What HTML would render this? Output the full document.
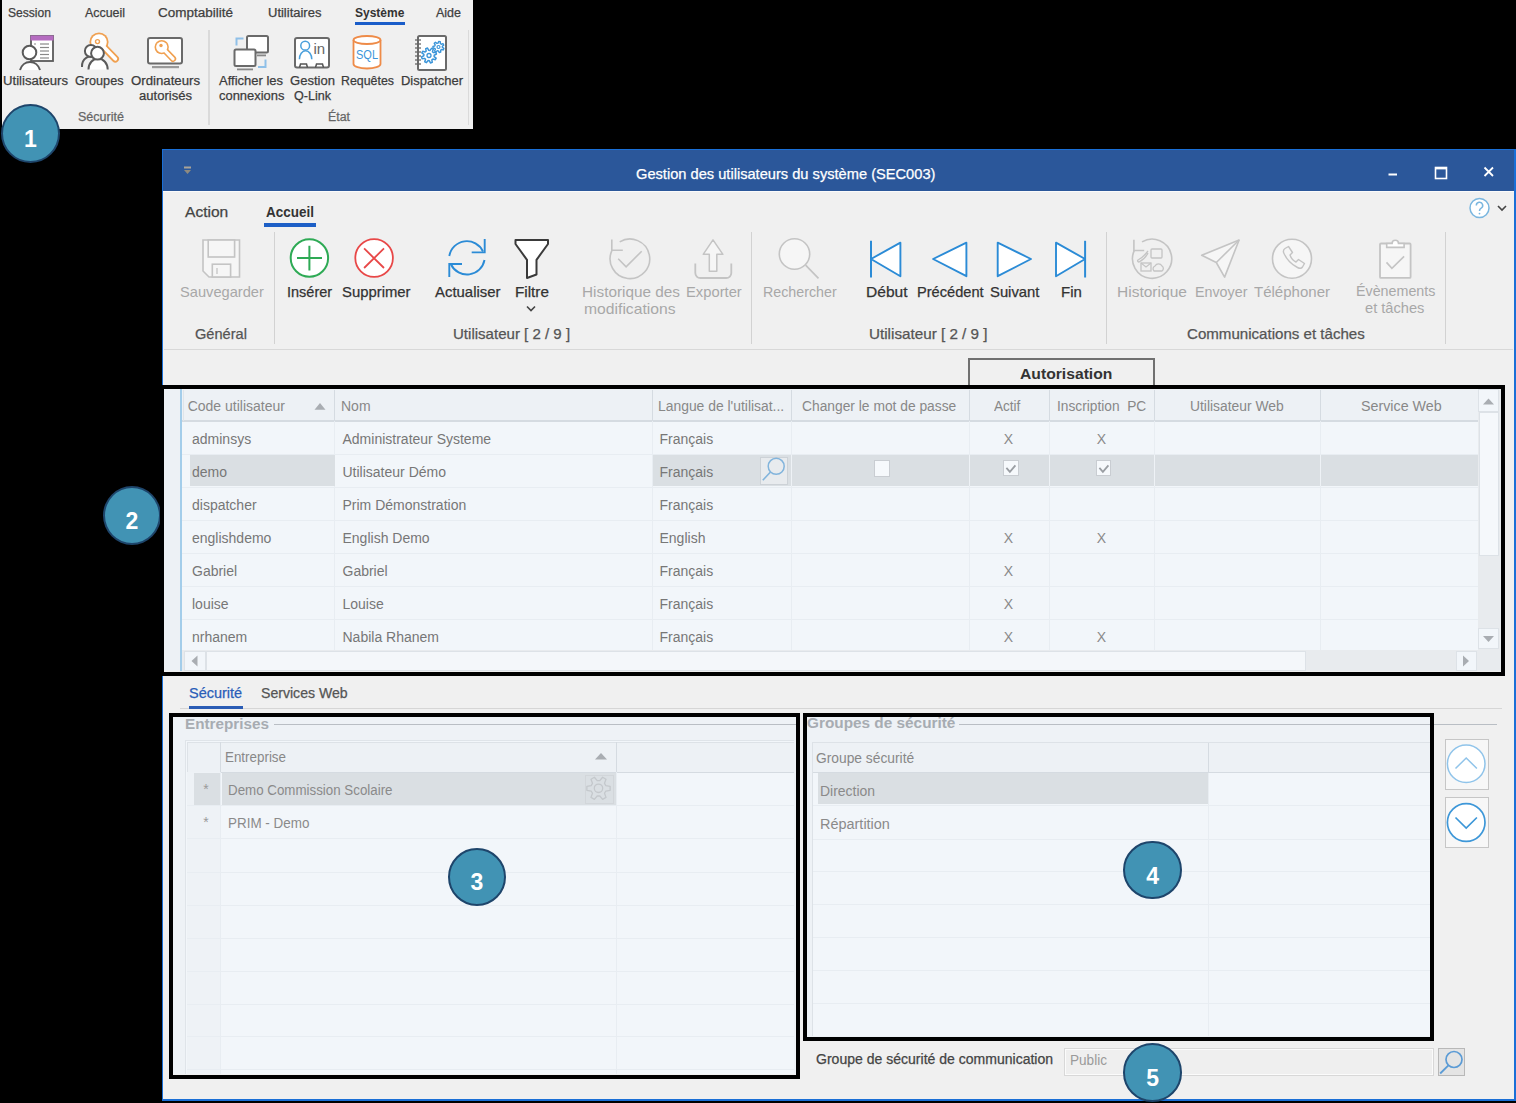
<!DOCTYPE html>
<html><head><meta charset="utf-8"><style>
html,body{margin:0;padding:0;background:#000;}
body{width:1516px;height:1103px;position:relative;overflow:hidden;font-family:"Liberation Sans", sans-serif;}
.a{position:absolute;}
.t{white-space:pre;}
svg.a{overflow:visible;}
.circ{border-radius:50%;background:#4193b4;border:2.2px solid #1e456b;box-sizing:border-box;color:#fff;font-weight:bold;text-align:center;}
</style></head><body>

<div class="a" style="left:2px;top:0px;width:471px;height:129px;background:#f0f0f0;"></div>
<div class="a" style="left:355px;top:22px;width:50px;height:3px;background:#1a5dc9;"></div>
<div class="a" style="left:208px;top:30px;width:2px;height:95px;background:#dadada;"></div>
<div class="a" style="left:468px;top:30px;width:1px;height:95px;background:#dadada;"></div>
<svg class="a" style="left:230px;top:32px;" width="42" height="40" viewBox="0 0 42 40">
<rect x="17" y="4" width="21" height="16.5" rx="1.5" fill="#fff" stroke="#6a6a6a" stroke-width="2"/>
<rect x="27" y="22.5" width="9" height="1.8" fill="#888"/>
<rect x="4.5" y="17.5" width="21" height="16.5" rx="1.5" fill="#fff" stroke="#6a6a6a" stroke-width="2"/>
<rect x="7" y="36.5" width="16" height="1.8" fill="#888"/>
<path d="M6.5 13.5 V6.5 H13.5" fill="none" stroke="#8fc0e8" stroke-width="2"/>
<path d="M28 35 H35.5 V27.5" fill="none" stroke="#8fc0e8" stroke-width="2"/>
</svg>
<svg class="a" style="left:350px;top:33px;" width="34" height="40" viewBox="0 0 34 40">
<path d="M3.5 7 V31 A13.5 4.5 0 0 0 30.5 31 V7" fill="#fff" stroke="#ee8b48" stroke-width="1.8"/>
<ellipse cx="17" cy="7" rx="13.5" ry="4" fill="#fff" stroke="#ee8b48" stroke-width="1.8"/>
<text x="17" y="26.5" text-anchor="middle" font-family="Liberation Sans" font-size="12" fill="#3b95d9" transform="translate(17 0) scale(0.92 1) translate(-17 0)">SQL</text>
</svg>
<div class="a" style="left:162px;top:149px;width:1354px;height:952px;background:#f0f0f0;border:1px solid #1a6fd6;border-right-width:2px;border-bottom-width:2px;box-sizing:border-box;"></div>
<div class="a" style="left:163px;top:150px;width:1351px;height:41px;background:#2b579a;"></div>
<div class="a" style="left:162px;top:149px;width:1353px;height:1px;background:#1a6fd6;"></div>
<div class="a" style="left:163px;top:191px;width:1351px;height:1px;background:#fbfbfb;"></div>
<svg class="a" style="left:181px;top:164px;" width="14" height="16" viewBox="0 0 14 16"><rect x="3" y="2.5" width="7" height="2" fill="#a9a397"/><path d="M3 6 L10 6 L6.5 10z" fill="#8e8a80"/></svg>
<svg class="a" style="left:1380px;top:160px;" width="130" height="24" viewBox="0 0 130 24">
<rect x="8.5" y="13.5" width="8.5" height="2" fill="#fff"/>
<rect x="55.5" y="7.5" width="11" height="11" fill="none" stroke="#fff" stroke-width="1.6"/>
<rect x="55" y="7" width="12" height="2.4" fill="#fff"/>
<path d="M104.5 7.5 L113 16 M113 7.5 L104.5 16" stroke="#fff" stroke-width="1.8"/>
</svg>
<div class="a" style="left:264px;top:223px;width:52px;height:4px;background:#1d5fc6;"></div>
<div class="a" style="left:273.5px;top:232px;width:1.0px;height:112px;background:#d2d2d2;"></div>
<div class="a" style="left:750.5px;top:232px;width:1.0px;height:112px;background:#d2d2d2;"></div>
<div class="a" style="left:1105.5px;top:232px;width:1.0px;height:112px;background:#d2d2d2;"></div>
<div class="a" style="left:1444.5px;top:232px;width:1.0px;height:112px;background:#d2d2d2;"></div>
<div class="a" style="left:164px;top:348.5px;width:1349px;height:1.5px;background:#d8d8d8;"></div>
<svg class="a" style="left:200px;top:237px;" width="44" height="44" viewBox="0 0 44 44">
<path d="M3 3 H39.5 V40 H9 L3 34 Z" fill="#f6f6f6" stroke="#c4c4c4" stroke-width="1.6"/>
<rect x="8.2" y="3" width="26.4" height="17" fill="#f6f6f6" stroke="#c4c4c4" stroke-width="1.6"/>
<rect x="12.3" y="27.2" width="18.3" height="12.8" fill="#f6f6f6" stroke="#c4c4c4" stroke-width="1.6"/>
<line x1="17" y1="31" x2="17" y2="37" stroke="#c4c4c4" stroke-width="1.3"/>
</svg>
<svg class="a" style="left:445px;top:236px;" width="44" height="44" viewBox="0 0 44 44">
<path d="M4.3 20 A17.8 17.8 0 0 1 38 15.5" fill="none" stroke="#2b8bd6" stroke-width="1.9"/>
<path d="M39.7 3 V16.4 H26.7" fill="none" stroke="#2b8bd6" stroke-width="1.9"/>
<path d="M39.5 24 A17.8 17.8 0 0 1 6 28.5" fill="none" stroke="#2b8bd6" stroke-width="1.9"/>
<path d="M4.3 41 V28 H17" fill="none" stroke="#2b8bd6" stroke-width="1.9"/>
</svg>
<svg class="a" style="left:512px;top:236px;" width="40" height="46" viewBox="0 0 40 46">
<path d="M3.5 4 H36 V8 L24.5 23.8 V38.5 L15 42 V23.8 L3.5 8 Z" fill="#fff" stroke="#3a3a3a" stroke-width="2" stroke-linejoin="round"/>
</svg>
<svg class="a" style="left:522px;top:302px;" width="18" height="12" viewBox="0 0 18 12"><path d="M5 4.5 L9 8.5 L13 4.5" fill="none" stroke="#444" stroke-width="1.6"/></svg>
<svg class="a" style="left:606px;top:236px;" width="48" height="46" viewBox="0 0 48 46">
<path d="M5.96 14.43 A19.8 19.8 0 1 0 13.70 5.83" fill="none" stroke="#c4c4c4" stroke-width="1.6"/>
<path d="M5.8 3.4 V14.2 H16.8" fill="none" stroke="#c4c4c4" stroke-width="1.6"/>
<path d="M12.2 22.8 L20.1 30.9 L35.7 15.2" fill="none" stroke="#c4c4c4" stroke-width="1.6"/>
</svg>
<svg class="a" style="left:692px;top:236px;" width="44" height="46" viewBox="0 0 44 46">
<path d="M21 3.9 L30.9 18.3 H24.8 V35.3 H17.3 V18.3 H11.2 Z" fill="#f6f6f6" stroke="#c4c4c4" stroke-width="1.5" stroke-linejoin="round"/>
<path d="M3.3 27.4 V37 a5 5 0 0 0 5 5 H34.3 a5 5 0 0 0 5 -5 V27.4" fill="none" stroke="#c4c4c4" stroke-width="1.8"/>
</svg>
<svg class="a" style="left:866px;top:236px;" width="40" height="46" viewBox="0 0 40 46"><path d="M5 4.8 V41.5" stroke="#2b8bd6" stroke-width="2"/><path d="M5 23 L34.4 6.7 V40.2 Z" fill="#fff" stroke="#2b8bd6" stroke-width="1.9" stroke-linejoin="round"/></svg>
<svg class="a" style="left:930px;top:236px;" width="40" height="46" viewBox="0 0 40 46"><path d="M3.1 23 L36.4 6.7 V40.2 Z" fill="#fff" stroke="#2b8bd6" stroke-width="1.9" stroke-linejoin="round"/></svg>
<svg class="a" style="left:994px;top:236px;" width="40" height="46" viewBox="0 0 40 46"><path d="M3.7 6.7 V40.2 L37 23 Z" fill="#fff" stroke="#2b8bd6" stroke-width="1.9" stroke-linejoin="round"/></svg>
<svg class="a" style="left:1052px;top:236px;" width="40" height="46" viewBox="0 0 40 46"><path d="M4 6.7 V40.2 L33.1 23 Z" fill="#fff" stroke="#2b8bd6" stroke-width="1.9" stroke-linejoin="round"/><path d="M33.1 4.8 V41.5" stroke="#2b8bd6" stroke-width="2"/></svg>
<svg class="a" style="left:1128px;top:236px;" width="48" height="46" viewBox="0 0 48 46">
<path d="M6.34 14.42 A19.6 19.6 0 1 0 14.01 5.90" fill="none" stroke="#c4c4c4" stroke-width="1.6"/>
<path d="M5.9 3.7 V14.5 H16.2" fill="none" stroke="#c4c4c4" stroke-width="1.6"/>
<path d="M20 15 c-3 4 -6 7 -10 9 c-1 1 0 2 1 2 c4 -2 7 -5 9 -9" fill="none" stroke="#c4c4c4" stroke-width="1.3"/>
<rect x="23" y="13" width="11" height="9" rx="1" fill="none" stroke="#c4c4c4" stroke-width="1.3"/>
<rect x="13" y="27" width="10" height="8" fill="none" stroke="#c4c4c4" stroke-width="1.3"/>
<path d="M13 27 l5 4 l5 -4" fill="none" stroke="#c4c4c4" stroke-width="1.1"/>
<path d="M26 35 h8 a3 3 0 0 0 0 -5 a4 4 0 0 0 -7 0 a3 3 0 0 0 -1 5z" fill="none" stroke="#c4c4c4" stroke-width="1.3"/>
</svg>
<svg class="a" style="left:1198px;top:236px;" width="46" height="46" viewBox="0 0 46 46">
<path d="M3.7 19.3 L41.1 4 L26.6 41.1 L18.3 26.5 Z" fill="#f6f6f6" stroke="#c4c4c4" stroke-width="1.6" stroke-linejoin="round"/>
<path d="M18.3 26.5 L41.1 4" stroke="#c4c4c4" stroke-width="1.6"/>
</svg>
<svg class="a" style="left:1376px;top:236px;" width="40" height="46" viewBox="0 0 40 46">
<rect x="4" y="7.5" width="30.6" height="34.4" rx="1" fill="#f6f6f6" stroke="#c4c4c4" stroke-width="1.8"/>
<path d="M10.7 7.5 V11.4 H28.1 V7.5 H22.5 a3.2 3.2 0 0 0 -6.4 0 Z" fill="#fff" stroke="#c4c4c4" stroke-width="1.6"/>
<path d="M10.5 26.4 L15.9 32.4 L28.1 20.4" fill="none" stroke="#c4c4c4" stroke-width="1.6"/>
</svg>
<div class="a" style="left:968px;top:358px;width:187px;height:31px;background:#f0f0f0;border:2px solid #707070;border-bottom:none;box-sizing:border-box;"></div>
<div class="a" style="left:164px;top:389px;width:1337px;height:282px;background:#f2f6fa;"></div>
<div class="a" style="left:164px;top:389px;width:16px;height:282px;background:#edf1f5;"></div>
<div class="a" style="left:180px;top:389px;width:2px;height:282px;background:#a3cdea;"></div>
<div class="a" style="left:182px;top:389px;width:1296px;height:32px;background:#edf1f5;"></div>
<div class="a" style="left:182px;top:420px;width:1296px;height:1.5px;background:#d5dbe1;"></div>
<div class="a" style="left:334px;top:390px;width:1.1999999999999886px;height:31px;background:#d5dbe1;"></div>
<div class="a" style="left:652.3px;top:390px;width:1.2000000000000455px;height:31px;background:#d5dbe1;"></div>
<div class="a" style="left:791px;top:390px;width:1.2000000000000455px;height:31px;background:#d5dbe1;"></div>
<div class="a" style="left:969px;top:390px;width:1.2000000000000455px;height:31px;background:#d5dbe1;"></div>
<div class="a" style="left:1048.5px;top:390px;width:1.2000000000000455px;height:31px;background:#d5dbe1;"></div>
<div class="a" style="left:1154px;top:390px;width:1.2000000000000455px;height:31px;background:#d5dbe1;"></div>
<div class="a" style="left:1320px;top:390px;width:1.2000000000000455px;height:31px;background:#d5dbe1;"></div>
<div class="a" style="left:183px;top:390px;width:0.5999999999999943px;height:31px;background:#dfe4e9;"></div>
<div class="a" style="left:182px;top:454px;width:1296px;height:1px;background:#e8edf2;"></div>
<div class="a" style="left:182px;top:487px;width:1296px;height:1px;background:#e8edf2;"></div>
<div class="a" style="left:182px;top:520px;width:1296px;height:1px;background:#e8edf2;"></div>
<div class="a" style="left:182px;top:553px;width:1296px;height:1px;background:#e8edf2;"></div>
<div class="a" style="left:182px;top:586px;width:1296px;height:1px;background:#e8edf2;"></div>
<div class="a" style="left:182px;top:619px;width:1296px;height:1px;background:#e8edf2;"></div>
<div class="a" style="left:334px;top:421px;width:1px;height:229px;background:#e8edf2;"></div>
<div class="a" style="left:652.3px;top:421px;width:1.0px;height:229px;background:#e8edf2;"></div>
<div class="a" style="left:791px;top:421px;width:1px;height:229px;background:#e8edf2;"></div>
<div class="a" style="left:969px;top:421px;width:1px;height:229px;background:#e8edf2;"></div>
<div class="a" style="left:1048.5px;top:421px;width:1.0px;height:229px;background:#e8edf2;"></div>
<div class="a" style="left:1154px;top:421px;width:1px;height:229px;background:#e8edf2;"></div>
<div class="a" style="left:1320px;top:421px;width:1px;height:229px;background:#e8edf2;"></div>
<div class="a" style="left:189.5px;top:454.5px;width:145.0px;height:31.5px;background:#dadfe3;"></div>
<div class="a" style="left:652.5px;top:454.5px;width:825.5px;height:31.5px;background:#dadfe3;"></div>
<div class="a" style="left:791px;top:454.5px;width:1px;height:31.5px;background:#eef2f6;"></div>
<div class="a" style="left:969px;top:454.5px;width:1px;height:31.5px;background:#eef2f6;"></div>
<div class="a" style="left:1048.5px;top:454.5px;width:1.0px;height:31.5px;background:#eef2f6;"></div>
<div class="a" style="left:1154px;top:454.5px;width:1px;height:31.5px;background:#eef2f6;"></div>
<div class="a" style="left:1320px;top:454.5px;width:1px;height:31.5px;background:#eef2f6;"></div>
<svg class="a" style="left:313px;top:401px;" width="14" height="10" viewBox="0 0 14 10"><path d="M1.5 8.7 L7 2 L12.5 8.7Z" fill="#a9adb2"/></svg>
<div class="a" style="left:760px;top:456.5px;width:28px;height:28.0px;background:#e8ebee;border:1px solid #cdd2d7;box-sizing:border-box;"></div>
<div class="a" style="left:873.5px;top:460px;width:16.0px;height:16.5px;background:#f6f9fc;border:1px solid #c9cdd2;box-sizing:border-box;"></div>
<div class="a" style="left:1003.3px;top:460.3px;width:15.5px;height:16.0px;background:#f6f9fc;border:1px solid #c9cdd2;box-sizing:border-box;"></div>
<svg class="a" style="left:1003.3px;top:460px;" width="16" height="16" viewBox="0 0 16 16"><path d="M3.4 7.8 L6.9 11.8 L12.4 5.4" fill="none" stroke="#9a9ea3" stroke-width="1.8"/></svg>
<div class="a" style="left:1095.9px;top:460.3px;width:15.5px;height:16.0px;background:#f6f9fc;border:1px solid #c9cdd2;box-sizing:border-box;"></div>
<svg class="a" style="left:1095.9px;top:460px;" width="16" height="16" viewBox="0 0 16 16"><path d="M3.4 7.8 L6.9 11.8 L12.4 5.4" fill="none" stroke="#9a9ea3" stroke-width="1.8"/></svg>
<div class="a" style="left:1478px;top:389px;width:23px;height:282px;background:#e8ebee;"></div>
<div class="a" style="left:1478px;top:389px;width:21px;height:23px;background:#f2f6fa;border:1px solid #dde2e7;box-sizing:border-box;"></div>
<svg class="a" style="left:1478px;top:389px;" width="21" height="23" viewBox="0 0 21 23"><path d="M5 15.5 L10.5 9.5 L16 15.5Z" fill="#a9adb2"/></svg>
<div class="a" style="left:1478.5px;top:412px;width:20.5px;height:144px;background:#f5f8fb;border:1px solid #dde2e7;box-sizing:border-box;"></div>
<div class="a" style="left:1478px;top:628px;width:21px;height:21px;background:#f2f6fa;border:1px solid #dde2e7;box-sizing:border-box;"></div>
<svg class="a" style="left:1478px;top:628px;" width="21" height="21" viewBox="0 0 21 21"><path d="M5 8 L10.5 14 L16 8Z" fill="#a9adb2"/></svg>
<div class="a" style="left:182px;top:650px;width:1296px;height:21px;background:#e8ebee;"></div>
<div class="a" style="left:183.5px;top:650.5px;width:22.0px;height:20.5px;background:#f2f6fa;border:1px solid #dde2e7;box-sizing:border-box;"></div>
<svg class="a" style="left:183px;top:650px;" width="22" height="21" viewBox="0 0 22 21"><path d="M14.5 5.5 L8.5 11 L14.5 16.5Z" fill="#a9adb2"/></svg>
<div class="a" style="left:205.5px;top:650.5px;width:1100.5px;height:20.5px;background:#f4f7fa;border:1px solid #dde2e7;box-sizing:border-box;"></div>
<div class="a" style="left:1455.5px;top:650.5px;width:21.5px;height:20.5px;background:#f2f6fa;border:1px solid #dde2e7;box-sizing:border-box;"></div>
<svg class="a" style="left:1455px;top:650px;" width="22" height="21" viewBox="0 0 22 21"><path d="M8 5.5 L14 11 L8 16.5Z" fill="#a9adb2"/></svg>
<div class="a" style="left:180px;top:708px;width:1322px;height:1.2999999999999545px;background:#d6d6d6;"></div>
<div class="a" style="left:189px;top:705.6px;width:53.5px;height:3.7999999999999545px;background:#2a5cb5;"></div>
<div class="a" style="left:173px;top:717px;width:623px;height:357px;background:#eef2f6;"></div>
<div class="a" style="left:807px;top:717px;width:623px;height:320px;background:#eef2f6;"></div>
<div class="a" style="left:273.5px;top:724.3px;width:522.5px;height:1.2000000000000455px;background:#b9bec4;"></div>
<div class="a" style="left:959px;top:723.5px;width:537.5px;height:1.2999999999999545px;background:#b9bec4;"></div>
<div class="a" style="left:185px;top:740px;width:609px;height:334px;background:#f2f6fa;"></div>
<div class="a" style="left:185px;top:740px;width:609px;height:1px;background:#dfe4e9;"></div>
<div class="a" style="left:185px;top:740px;width:1px;height:334px;background:#dfe4e9;"></div>
<div class="a" style="left:187px;top:742px;width:607px;height:30px;background:#edf1f5;"></div>
<div class="a" style="left:187px;top:742px;width:607px;height:1px;background:#dde2e7;"></div>
<div class="a" style="left:187px;top:771.5px;width:607px;height:1.1000000000000227px;background:#d5dbe1;"></div>
<div class="a" style="left:187px;top:742px;width:1px;height:30px;background:#dde2e7;"></div>
<div class="a" style="left:219.5px;top:742px;width:1.1999999999999886px;height:30px;background:#d5dbe1;"></div>
<div class="a" style="left:219.5px;top:772px;width:1.0px;height:302px;background:#e8edf2;"></div>
<div class="a" style="left:616px;top:742px;width:1.2000000000000455px;height:30px;background:#d5dbe1;"></div>
<div class="a" style="left:616px;top:772px;width:1px;height:302px;background:#e8edf2;"></div>
<div class="a" style="left:187px;top:772px;width:32.5px;height:302px;background:#eef2f6;"></div>
<div class="a" style="left:187px;top:804.5px;width:607px;height:1.0px;background:#e8edf2;"></div>
<div class="a" style="left:187px;top:838px;width:607px;height:1px;background:#e8edf2;"></div>
<div class="a" style="left:187px;top:871.5px;width:607px;height:1.0px;background:#e8edf2;"></div>
<div class="a" style="left:187px;top:904.5px;width:607px;height:1.0px;background:#e8edf2;"></div>
<div class="a" style="left:187px;top:937.5px;width:607px;height:1.0px;background:#e8edf2;"></div>
<div class="a" style="left:187px;top:970.5px;width:607px;height:1.0px;background:#e8edf2;"></div>
<div class="a" style="left:187px;top:1003.5px;width:607px;height:1.0px;background:#e8edf2;"></div>
<div class="a" style="left:187px;top:1036px;width:607px;height:1px;background:#e8edf2;"></div>
<div class="a" style="left:187px;top:1069px;width:607px;height:1px;background:#e8edf2;"></div>
<div class="a" style="left:194px;top:772.5px;width:25.5px;height:32.0px;background:#dadfe3;"></div>
<div class="a" style="left:221.5px;top:772.5px;width:394.5px;height:32.0px;background:#dadfe3;"></div>
<svg class="a" style="left:593px;top:750px;" width="16" height="12" viewBox="0 0 16 12"><path d="M2 9.5 L8 3 L14 9.5Z" fill="#a9adb2"/></svg>
<div class="a" style="left:585px;top:774.5px;width:29px;height:29.0px;background:#dadfe3;border:1px solid #d2d6da;box-sizing:border-box;"></div>
<div class="a" style="left:811.5px;top:742px;width:618.5px;height:294px;background:#f2f6fa;"></div>
<div class="a" style="left:811.5px;top:742px;width:618.5px;height:1px;background:#dde2e7;"></div>
<div class="a" style="left:811.5px;top:742px;width:1.0px;height:294px;background:#dde2e7;"></div>
<div class="a" style="left:812.5px;top:743px;width:617.5px;height:29.5px;background:#edf1f5;"></div>
<div class="a" style="left:812.5px;top:772px;width:617.5px;height:1.2000000000000455px;background:#d5dbe1;"></div>
<div class="a" style="left:1207.5px;top:743px;width:1.2000000000000455px;height:29.5px;background:#d5dbe1;"></div>
<div class="a" style="left:1207.5px;top:773px;width:1.0px;height:263px;background:#e8edf2;"></div>
<div class="a" style="left:812.5px;top:804.5px;width:617.5px;height:1.0px;background:#e8edf2;"></div>
<div class="a" style="left:812.5px;top:838.5px;width:617.5px;height:1.0px;background:#e8edf2;"></div>
<div class="a" style="left:812.5px;top:871.3px;width:617.5px;height:1.0px;background:#e8edf2;"></div>
<div class="a" style="left:812.5px;top:904px;width:617.5px;height:1px;background:#e8edf2;"></div>
<div class="a" style="left:812.5px;top:937px;width:617.5px;height:1px;background:#e8edf2;"></div>
<div class="a" style="left:812.5px;top:970px;width:617.5px;height:1px;background:#e8edf2;"></div>
<div class="a" style="left:812.5px;top:1003px;width:617.5px;height:1px;background:#e8edf2;"></div>
<div class="a" style="left:818px;top:773px;width:389.5px;height:31.399999999999977px;background:#dadfe3;"></div>
<div class="a" style="left:1445px;top:739.3px;width:44.200000000000045px;height:50.700000000000045px;background:#f7f7f7;border:1px solid #c6c6c6;box-sizing:border-box;"></div>
<div class="a" style="left:1445px;top:797.2px;width:44.200000000000045px;height:51.299999999999955px;background:#f7f7f7;border:1px solid #c6c6c6;box-sizing:border-box;"></div>
<div class="a" style="left:1064px;top:1047.5px;width:370.20000000000005px;height:28.700000000000045px;background:#efefef;border:1px solid #d8d8d8;box-sizing:border-box;"></div>
<div class="a" style="left:1065px;top:1048.5px;width:368.20000000000005px;height:26.700000000000045px;border:1px solid #fbfbfb;box-sizing:border-box;"></div>
<div class="a" style="left:1437.5px;top:1047.5px;width:27.799999999999955px;height:28.299999999999955px;background:#e4e4e4;border:1.2px solid #b8b8b8;box-sizing:border-box;"></div>
<div class="a t" style="top:6.84px;font-size:12px;line-height:12px;color:#404040;-webkit-text-stroke:0.25px #404040;left:8.00px;transform:scaleX(1.0070);transform-origin:0 0;">Session</div>
<div class="a t" style="top:6.84px;font-size:12px;line-height:12px;color:#404040;-webkit-text-stroke:0.25px #404040;left:85.00px;transform:scaleX(1.0339);transform-origin:0 0;">Accueil</div>
<div class="a t" style="top:6.84px;font-size:12px;line-height:12px;color:#404040;-webkit-text-stroke:0.25px #404040;left:158.00px;transform:scaleX(1.1244);transform-origin:0 0;">Comptabilité</div>
<div class="a t" style="top:6.84px;font-size:12px;line-height:12px;color:#404040;-webkit-text-stroke:0.25px #404040;left:267.60px;transform:scaleX(1.0822);transform-origin:0 0;">Utilitaires</div>
<div class="a t" style="top:6.84px;font-size:12px;line-height:12px;color:#333;font-weight:bold;left:354.60px;transform:scaleX(1.0005);transform-origin:0 0;">Système</div>
<div class="a t" style="top:6.84px;font-size:12px;line-height:12px;color:#404040;-webkit-text-stroke:0.25px #404040;left:436.00px;transform:scaleX(1.0403);transform-origin:0 0;">Aide</div>
<div class="a t" style="top:75.42px;font-size:12.5px;line-height:12.5px;color:#3c3c3c;-webkit-text-stroke:0.25px #3c3c3c;left:3.00px;transform:scaleX(1.0513);transform-origin:0 0;">Utilisateurs</div>
<div class="a t" style="top:75.42px;font-size:12.5px;line-height:12.5px;color:#3c3c3c;-webkit-text-stroke:0.25px #3c3c3c;left:75.00px;transform:scaleX(1.0114);transform-origin:0 0;">Groupes</div>
<div class="a t" style="top:75.42px;font-size:12.5px;line-height:12.5px;color:#3c3c3c;-webkit-text-stroke:0.25px #3c3c3c;left:130.50px;transform:scaleX(1.0565);transform-origin:0 0;">Ordinateurs</div>
<div class="a t" style="top:90.12px;font-size:12.5px;line-height:12.5px;color:#3c3c3c;-webkit-text-stroke:0.25px #3c3c3c;left:139.00px;transform:scaleX(1.0447);transform-origin:0 0;">autorisés</div>
<div class="a t" style="top:75.42px;font-size:12.5px;line-height:12.5px;color:#3c3c3c;-webkit-text-stroke:0.25px #3c3c3c;left:219.40px;transform:scaleX(1.0388);transform-origin:0 0;">Afficher les</div>
<div class="a t" style="top:90.12px;font-size:12.5px;line-height:12.5px;color:#3c3c3c;-webkit-text-stroke:0.25px #3c3c3c;left:218.50px;transform:scaleX(1.0356);transform-origin:0 0;">connexions</div>
<div class="a t" style="top:75.42px;font-size:12.5px;line-height:12.5px;color:#3c3c3c;-webkit-text-stroke:0.25px #3c3c3c;left:289.70px;transform:scaleX(1.0442);transform-origin:0 0;">Gestion</div>
<div class="a t" style="top:90.12px;font-size:12.5px;line-height:12.5px;color:#3c3c3c;-webkit-text-stroke:0.25px #3c3c3c;left:294.00px;transform:scaleX(1.0047);transform-origin:0 0;">Q-Link</div>
<div class="a t" style="top:75.42px;font-size:12.5px;line-height:12.5px;color:#3c3c3c;-webkit-text-stroke:0.25px #3c3c3c;left:341.00px;transform:scaleX(0.9904);transform-origin:0 0;">Requêtes</div>
<div class="a t" style="top:75.42px;font-size:12.5px;line-height:12.5px;color:#3c3c3c;-webkit-text-stroke:0.25px #3c3c3c;left:401.00px;transform:scaleX(1.0377);transform-origin:0 0;">Dispatcher</div>
<div class="a t" style="top:111.42px;font-size:12.5px;line-height:12.5px;color:#666;-webkit-text-stroke:0.25px #666;left:77.80px;transform:scaleX(1.0009);transform-origin:0 0;">Sécurité</div>
<div class="a t" style="top:111.42px;font-size:12.5px;line-height:12.5px;color:#666;-webkit-text-stroke:0.25px #666;left:328.00px;transform:scaleX(0.9888);transform-origin:0 0;">État</div>
<div class="a t" style="top:166.73px;font-size:14.5px;line-height:14.5px;color:#ffffff;-webkit-text-stroke:0.25px #ffffff;left:635.60px;transform:scaleX(1.0095);transform-origin:0 0;">Gestion des utilisateurs du système (SEC003)</div>
<div class="a t" style="top:204.73px;font-size:14.5px;line-height:14.5px;color:#444;-webkit-text-stroke:0.25px #444;left:184.60px;transform:scaleX(1.0741);transform-origin:0 0;">Action</div>
<div class="a t" style="top:204.73px;font-size:14.5px;line-height:14.5px;color:#333;font-weight:bold;left:265.70px;transform:scaleX(0.9284);transform-origin:0 0;">Accueil</div>
<div class="a t" style="top:285.13px;font-size:14.5px;line-height:14.5px;color:#a8a8a8;left:179.70px;transform:scaleX(1.0105);transform-origin:0 0;">Sauvegarder</div>
<div class="a t" style="top:327.33px;font-size:14.5px;line-height:14.5px;color:#555;-webkit-text-stroke:0.25px #555;left:195.40px;transform:scaleX(1.0059);transform-origin:0 0;">Général</div>
<div class="a t" style="top:285.13px;font-size:14.5px;line-height:14.5px;color:#333;-webkit-text-stroke:0.25px #333;left:286.60px;transform:scaleX(0.9991);transform-origin:0 0;">Insérer</div>
<div class="a t" style="top:285.13px;font-size:14.5px;line-height:14.5px;color:#333;-webkit-text-stroke:0.25px #333;left:341.50px;transform:scaleX(1.0241);transform-origin:0 0;">Supprimer</div>
<div class="a t" style="top:285.13px;font-size:14.5px;line-height:14.5px;color:#333;-webkit-text-stroke:0.25px #333;left:434.50px;transform:scaleX(1.0287);transform-origin:0 0;">Actualiser</div>
<div class="a t" style="top:285.13px;font-size:14.5px;line-height:14.5px;color:#333;-webkit-text-stroke:0.25px #333;left:515.00px;transform:scaleX(1.0517);transform-origin:0 0;">Filtre</div>
<div class="a t" style="top:285.13px;font-size:14.5px;line-height:14.5px;color:#a8a8a8;left:581.60px;transform:scaleX(1.0573);transform-origin:0 0;">Historique des</div>
<div class="a t" style="top:301.73px;font-size:14.5px;line-height:14.5px;color:#a8a8a8;left:584.00px;transform:scaleX(1.0824);transform-origin:0 0;">modifications</div>
<div class="a t" style="top:285.13px;font-size:14.5px;line-height:14.5px;color:#a8a8a8;left:686.00px;transform:scaleX(1.0180);transform-origin:0 0;">Exporter</div>
<div class="a t" style="top:327.23px;font-size:14.5px;line-height:14.5px;color:#555;-webkit-text-stroke:0.25px #555;left:453.40px;transform:scaleX(1.0379);transform-origin:0 0;">Utilisateur [ 2 / 9 ]</div>
<div class="a t" style="top:285.13px;font-size:14.5px;line-height:14.5px;color:#a8a8a8;left:763.00px;transform:scaleX(0.9833);transform-origin:0 0;">Rechercher</div>
<div class="a t" style="top:285.13px;font-size:14.5px;line-height:14.5px;color:#333;-webkit-text-stroke:0.25px #333;left:865.50px;transform:scaleX(1.0723);transform-origin:0 0;">Début</div>
<div class="a t" style="top:285.13px;font-size:14.5px;line-height:14.5px;color:#333;-webkit-text-stroke:0.25px #333;left:917.00px;transform:scaleX(1.0074);transform-origin:0 0;">Précédent</div>
<div class="a t" style="top:285.13px;font-size:14.5px;line-height:14.5px;color:#333;-webkit-text-stroke:0.25px #333;left:990.00px;transform:scaleX(1.0212);transform-origin:0 0;">Suivant</div>
<div class="a t" style="top:285.13px;font-size:14.5px;line-height:14.5px;color:#333;-webkit-text-stroke:0.25px #333;left:1061.00px;transform:scaleX(1.0319);transform-origin:0 0;">Fin</div>
<div class="a t" style="top:327.23px;font-size:14.5px;line-height:14.5px;color:#555;-webkit-text-stroke:0.25px #555;left:869.00px;transform:scaleX(1.0503);transform-origin:0 0;">Utilisateur [ 2 / 9 ]</div>
<div class="a t" style="top:285.13px;font-size:14.5px;line-height:14.5px;color:#a8a8a8;left:1117.00px;transform:scaleX(1.0708);transform-origin:0 0;">Historique</div>
<div class="a t" style="top:285.13px;font-size:14.5px;line-height:14.5px;color:#a8a8a8;left:1194.60px;transform:scaleX(0.9849);transform-origin:0 0;">Envoyer</div>
<div class="a t" style="top:285.13px;font-size:14.5px;line-height:14.5px;color:#a8a8a8;left:1254.00px;transform:scaleX(1.0360);transform-origin:0 0;">Téléphoner</div>
<div class="a t" style="top:284.43px;font-size:14.5px;line-height:14.5px;color:#a8a8a8;left:1356.00px;transform:scaleX(0.9850);transform-origin:0 0;">Évènements</div>
<div class="a t" style="top:301.43px;font-size:14.5px;line-height:14.5px;color:#a8a8a8;left:1365.40px;transform:scaleX(1.0095);transform-origin:0 0;">et tâches</div>
<div class="a t" style="top:327.23px;font-size:14.5px;line-height:14.5px;color:#555;-webkit-text-stroke:0.25px #555;left:1186.90px;transform:scaleX(1.0406);transform-origin:0 0;">Communications et tâches</div>
<div class="a t" style="top:366.73px;font-size:14.5px;line-height:14.5px;color:#333;font-weight:bold;left:1020.00px;transform:scaleX(1.0821);transform-origin:0 0;">Autorisation</div>
<div class="a t" style="top:399.15px;font-size:14px;line-height:14px;color:#888888;left:187.70px;">Code utilisateur</div>
<div class="a t" style="top:399.15px;font-size:14px;line-height:14px;color:#888888;left:341.00px;">Nom</div>
<div class="a t" style="top:399.15px;font-size:14px;line-height:14px;color:#888888;left:657.80px;transform:scaleX(0.9921);transform-origin:0 0;">Langue de l'utilisat...</div>
<div class="a t" style="top:399.15px;font-size:14px;line-height:14px;color:#888888;left:802.00px;transform:scaleX(0.9863);transform-origin:0 0;">Changer le mot de passe</div>
<div class="a t" style="top:399.15px;font-size:14px;line-height:14px;color:#888888;left:994.40px;transform:scaleX(0.9694);transform-origin:0 0;">Actif</div>
<div class="a t" style="top:399.15px;font-size:14px;line-height:14px;color:#888888;left:1056.80px;transform:scaleX(0.9797);transform-origin:0 0;">Inscription  PC</div>
<div class="a t" style="top:399.15px;font-size:14px;line-height:14px;color:#888888;left:1189.60px;transform:scaleX(0.9908);transform-origin:0 0;">Utilisateur Web</div>
<div class="a t" style="top:399.15px;font-size:14px;line-height:14px;color:#888888;left:1361.20px;transform:scaleX(1.0188);transform-origin:0 0;">Service Web</div>
<div class="a t" style="top:432.15px;font-size:14px;line-height:14px;color:#777777;left:192.00px;">adminsys</div>
<div class="a t" style="top:432.15px;font-size:14px;line-height:14px;color:#777777;left:342.50px;">Administrateur Systeme</div>
<div class="a t" style="top:432.15px;font-size:14px;line-height:14px;color:#777777;left:659.50px;">Français</div>
<div class="a t" style="top:432.15px;font-size:14px;line-height:14px;color:#8a8a8a;left:1003.83px;">X</div>
<div class="a t" style="top:432.15px;font-size:14px;line-height:14px;color:#8a8a8a;left:1096.83px;">X</div>
<div class="a t" style="top:465.15px;font-size:14px;line-height:14px;color:#777777;left:192.00px;">demo</div>
<div class="a t" style="top:465.15px;font-size:14px;line-height:14px;color:#777777;left:342.50px;">Utilisateur Démo</div>
<div class="a t" style="top:465.15px;font-size:14px;line-height:14px;color:#777777;left:659.50px;">Français</div>
<div class="a t" style="top:498.15px;font-size:14px;line-height:14px;color:#777777;left:192.00px;">dispatcher</div>
<div class="a t" style="top:498.15px;font-size:14px;line-height:14px;color:#777777;left:342.50px;">Prim Démonstration</div>
<div class="a t" style="top:498.15px;font-size:14px;line-height:14px;color:#777777;left:659.50px;">Français</div>
<div class="a t" style="top:531.15px;font-size:14px;line-height:14px;color:#777777;left:192.00px;">englishdemo</div>
<div class="a t" style="top:531.15px;font-size:14px;line-height:14px;color:#777777;left:342.50px;">English Demo</div>
<div class="a t" style="top:531.15px;font-size:14px;line-height:14px;color:#777777;left:659.50px;">English</div>
<div class="a t" style="top:531.15px;font-size:14px;line-height:14px;color:#8a8a8a;left:1003.83px;">X</div>
<div class="a t" style="top:531.15px;font-size:14px;line-height:14px;color:#8a8a8a;left:1096.83px;">X</div>
<div class="a t" style="top:564.15px;font-size:14px;line-height:14px;color:#777777;left:192.00px;">Gabriel</div>
<div class="a t" style="top:564.15px;font-size:14px;line-height:14px;color:#777777;left:342.50px;">Gabriel</div>
<div class="a t" style="top:564.15px;font-size:14px;line-height:14px;color:#777777;left:659.50px;">Français</div>
<div class="a t" style="top:564.15px;font-size:14px;line-height:14px;color:#8a8a8a;left:1003.83px;">X</div>
<div class="a t" style="top:597.15px;font-size:14px;line-height:14px;color:#777777;left:192.00px;">louise</div>
<div class="a t" style="top:597.15px;font-size:14px;line-height:14px;color:#777777;left:342.50px;">Louise</div>
<div class="a t" style="top:597.15px;font-size:14px;line-height:14px;color:#777777;left:659.50px;">Français</div>
<div class="a t" style="top:597.15px;font-size:14px;line-height:14px;color:#8a8a8a;left:1003.83px;">X</div>
<div class="a t" style="top:630.15px;font-size:14px;line-height:14px;color:#777777;left:192.00px;">nrhanem</div>
<div class="a t" style="top:630.15px;font-size:14px;line-height:14px;color:#777777;left:342.50px;">Nabila Rhanem</div>
<div class="a t" style="top:630.15px;font-size:14px;line-height:14px;color:#777777;left:659.50px;">Français</div>
<div class="a t" style="top:630.15px;font-size:14px;line-height:14px;color:#8a8a8a;left:1003.83px;">X</div>
<div class="a t" style="top:630.15px;font-size:14px;line-height:14px;color:#8a8a8a;left:1096.83px;">X</div>
<div class="a t" style="top:685.73px;font-size:14.5px;line-height:14.5px;color:#2a5db8;-webkit-text-stroke:0.25px #2a5db8;left:189.00px;transform:scaleX(0.9999);transform-origin:0 0;">Sécurité</div>
<div class="a t" style="top:686.15px;font-size:14px;line-height:14px;color:#555;-webkit-text-stroke:0.25px #555;left:260.60px;transform:scaleX(1.0069);transform-origin:0 0;">Services Web</div>
<div class="a t" style="top:716.93px;font-size:14.5px;line-height:14.5px;color:#a7acb2;font-weight:bold;left:184.80px;transform:scaleX(1.0527);transform-origin:0 0;">Entreprises</div>
<div class="a t" style="top:716.43px;font-size:14.5px;line-height:14.5px;color:#a7acb2;font-weight:bold;left:806.80px;transform:scaleX(1.0583);transform-origin:0 0;">Groupes de sécurité</div>
<div class="a t" style="top:750.35px;font-size:14px;line-height:14px;color:#888888;left:225.30px;transform:scaleX(0.9559);transform-origin:0 0;">Entreprise</div>
<div class="a t" style="top:782.15px;font-size:14px;line-height:14px;color:#9a9a9a;left:203.30px;">*</div>
<div class="a t" style="top:815.15px;font-size:14px;line-height:14px;color:#9a9a9a;left:203.30px;">*</div>
<div class="a t" style="top:783.35px;font-size:14px;line-height:14px;color:#8a8a8a;left:227.50px;transform:scaleX(0.9524);transform-origin:0 0;">Demo Commission Scolaire</div>
<div class="a t" style="top:816.35px;font-size:14px;line-height:14px;color:#8a8a8a;left:227.50px;transform:scaleX(0.9599);transform-origin:0 0;">PRIM - Demo</div>
<div class="a t" style="top:750.65px;font-size:14px;line-height:14px;color:#888888;left:816.30px;transform:scaleX(0.9859);transform-origin:0 0;">Groupe sécurité</div>
<div class="a t" style="top:783.65px;font-size:14px;line-height:14px;color:#8a8a8a;left:819.70px;transform:scaleX(0.9973);transform-origin:0 0;">Direction</div>
<div class="a t" style="top:816.65px;font-size:14px;line-height:14px;color:#8a8a8a;left:819.70px;transform:scaleX(1.0324);transform-origin:0 0;">Répartition</div>
<div class="a t" style="top:1051.95px;font-size:14px;line-height:14px;color:#444;-webkit-text-stroke:0.25px #444;left:816.30px;transform:scaleX(1.0022);transform-origin:0 0;">Groupe de sécurité de communication</div>
<div class="a t" style="top:1053.15px;font-size:14px;line-height:14px;color:#9a9a9a;left:1070.00px;transform:scaleX(0.9701);transform-origin:0 0;">Public</div>
<div class="a" style="left:160px;top:385px;width:1345px;height:290.5px;border:4px solid #000;box-sizing:border-box;"></div>
<div class="a" style="left:169px;top:713px;width:631px;height:366px;border:4px solid #000;box-sizing:border-box;"></div>
<div class="a" style="left:803px;top:713px;width:631px;height:328px;border:4px solid #000;box-sizing:border-box;"></div>
<svg class="a" style="left:14px;top:30px;" width="45" height="42" viewBox="0 0 45 42">
<rect x="17" y="6" width="22" height="25" fill="#fff" stroke="#5a5a5a" stroke-width="1.8"/>
<rect x="16.5" y="5.5" width="23" height="5" fill="#b56cc0"/>
<g stroke="#888" stroke-width="1.2"><line x1="26" y1="14" x2="35" y2="14"/><line x1="26" y1="17.5" x2="35" y2="17.5"/><line x1="26" y1="21" x2="35" y2="21"/><line x1="26" y1="24.5" x2="35" y2="24.5"/><line x1="26" y1="28" x2="35" y2="28"/><line x1="20" y1="14" x2="22" y2="14"/></g>
<path d="M6 40 A10.5 11.5 0 0 1 26 40" fill="#fff" stroke="#5a5a5a" stroke-width="2"/>
<circle cx="15.5" cy="22.5" r="6.8" fill="#fff" stroke="#5a5a5a" stroke-width="2"/>
</svg>
<svg class="a" style="left:78px;top:30px;" width="45" height="42" viewBox="0 0 45 42">
<g fill="#f0a050" stroke="#f0a050"><circle cx="21" cy="12" r="9.6" stroke="none"/><line x1="21" y1="12" x2="37.3" y2="28.8" stroke-width="7.4" stroke-linecap="round"/></g>
<g fill="#fff" stroke="#fff"><circle cx="21" cy="12" r="7.8" stroke="none"/><line x1="21" y1="12" x2="37.3" y2="28.8" stroke-width="3.8" stroke-linecap="round"/></g>
<circle cx="19.5" cy="11.6" r="2" fill="none" stroke="#f0a050" stroke-width="1.4"/>
<path d="M4 37 A9 10 0 0 1 18 28" fill="none" stroke="#5a5a5a" stroke-width="2"/>
<circle cx="12.9" cy="21" r="6" fill="#fff" stroke="#5a5a5a" stroke-width="2"/>
<path d="M10.5 39.5 A9.6 11 0 0 1 29.7 39.5" fill="#fff" stroke="#5a5a5a" stroke-width="2"/>
<circle cx="19.5" cy="23.2" r="6.4" fill="#fff" stroke="#5a5a5a" stroke-width="2"/>
</svg>
<svg class="a" style="left:145px;top:34px;" width="40" height="36" viewBox="0 0 40 36">
<rect x="3" y="4" width="34" height="25.5" rx="2" fill="#fff" stroke="#6a6a6a" stroke-width="2"/>
<rect x="7" y="32" width="27" height="2.2" fill="#9a9a9a"/>
<g fill="#f0a050" stroke="#f0a050"><circle cx="16.7" cy="13.1" r="7.2" stroke="none"/><line x1="16.7" y1="13.1" x2="28" y2="24.8" stroke-width="6.4" stroke-linecap="round"/></g>
<g fill="#fff" stroke="#fff"><circle cx="16.7" cy="13.1" r="5.6" stroke="none"/><line x1="16.7" y1="13.1" x2="28" y2="24.8" stroke-width="3.2" stroke-linecap="round"/></g>
<circle cx="16" cy="11.5" r="1.7" fill="#f0a050"/>
</svg>
<svg class="a" style="left:292px;top:35px;" width="40" height="36" viewBox="0 0 40 36">
<rect x="3" y="3" width="34" height="29.5" rx="2" fill="#fff" stroke="#6a6a6a" stroke-width="2"/>
<circle cx="13.2" cy="10.7" r="4.4" fill="none" stroke="#4aa0dc" stroke-width="1.5"/>
<path d="M7.4 24.2 A6.2 8.5 0 0 1 19.8 24.2" fill="none" stroke="#4aa0dc" stroke-width="1.5"/>
<text x="21.5" y="19.2" font-family="Liberation Sans" font-size="15" fill="#666">in</text>
<path d="M7.5 32.5 l1 -3.5 h6 l1 3.5 M23.5 32.5 l1 -3.5 h6 l1 3.5" fill="none" stroke="#555" stroke-width="1.5"/>
</svg>
<svg class="a" style="left:412px;top:33px;" width="38" height="40" viewBox="0 0 38 40">
<rect x="6" y="3" width="28" height="34" rx="1.5" fill="#fff" stroke="#6a6a6a" stroke-width="2"/>
<g stroke="#666" stroke-width="1.3"><line x1="3" y1="7" x2="9" y2="7"/><line x1="3" y1="11" x2="9" y2="11"/><line x1="3" y1="15" x2="9" y2="15"/><line x1="3" y1="19" x2="9" y2="19"/><line x1="3" y1="23" x2="9" y2="23"/><line x1="3" y1="27" x2="9" y2="27"/><line x1="3" y1="31" x2="9" y2="31"/></g>
<path d="M22.10 23.53 L24.16 25.04 L23.30 26.75 L20.86 25.98 L19.87 26.83 L20.26 29.36 L18.46 29.96 L17.27 27.69 L15.97 27.60 L14.46 29.66 L12.75 28.80 L13.52 26.36 L12.67 25.37 L10.14 25.76 L9.54 23.96 L11.81 22.77 L11.90 21.47 L9.84 19.96 L10.70 18.25 L13.14 19.02 L14.13 18.17 L13.74 15.64 L15.54 15.04 L16.73 17.31 L18.03 17.40 L19.54 15.34 L21.25 16.20 L20.48 18.64 L21.33 19.63 L23.86 19.24 L24.46 21.04 L22.19 22.23Z" fill="#fff" stroke="#3b95d9" stroke-width="1.5" stroke-linejoin="round"/>
<circle cx="17" cy="22.5" r="2" fill="none" stroke="#3b95d9" stroke-width="1.3"/>
<path d="M30.38 14.39 L31.91 15.45 L31.28 16.92 L29.46 16.54 L28.62 17.28 L28.74 19.13 L27.19 19.56 L26.36 17.90 L25.26 17.70 L23.88 18.95 L22.59 18.01 L23.36 16.32 L22.83 15.33 L21.00 15.04 L20.93 13.44 L22.73 12.99 L23.17 11.97 L22.25 10.35 L23.46 9.30 L24.94 10.43 L26.02 10.13 L26.71 8.40 L28.28 8.69 L28.32 10.55 L29.22 11.21 L31.00 10.67 L31.76 12.09 L30.33 13.27Z" fill="#fff" stroke="#3b95d9" stroke-width="1.4" stroke-linejoin="round"/>
<circle cx="26.5" cy="14" r="1.5" fill="none" stroke="#3b95d9" stroke-width="1.2"/>
</svg>
<svg class="a" style="left:1466px;top:196px;" width="44" height="24" viewBox="0 0 44 24">
<circle cx="13.5" cy="12" r="9.5" fill="#fff" stroke="#7ab6df" stroke-width="1.5"/>
<path d="M10.3 9.5 a3.2 3.2 0 1 1 4.6 2.9 c-1.2 0.7 -1.4 1.3 -1.4 2.6" fill="none" stroke="#7ab6df" stroke-width="1.5"/>
<circle cx="13.5" cy="17.6" r="0.9" fill="#7ab6df"/>
<path d="M32 10 l4 4 l4 -4" fill="none" stroke="#444" stroke-width="1.6"/>
</svg>
<svg class="a" style="left:288px;top:237px;" width="44" height="44" viewBox="0 0 44 44"><circle cx="21.4" cy="21" r="18.7" fill="#fff" stroke="#2eaa55" stroke-width="2"/>
<path d="M21.4 8.8 V33.4 M9 21 H34" stroke="#2eaa55" stroke-width="2"/></svg>
<svg class="a" style="left:353px;top:237px;" width="44" height="44" viewBox="0 0 44 44"><circle cx="21.1" cy="21" r="18.8" fill="#fff" stroke="#e84848" stroke-width="1.8"/>
<path d="M11.1 11.4 L31 31 M31 11.4 L11.1 31" stroke="#e84848" stroke-width="1.8"/></svg>
<svg class="a" style="left:776px;top:236px;" width="46" height="46" viewBox="0 0 46 46">
<circle cx="18.5" cy="18" r="15.2" fill="#f6f6f6" stroke="#c4c4c4" stroke-width="1.6"/>
<path d="M29.6 29.2 L42.5 42.3" stroke="#c4c4c4" stroke-width="1.7"/>
</svg>
<svg class="a" style="left:1270px;top:236px;" width="46" height="46" viewBox="0 0 46 46">
<circle cx="22" cy="22.7" r="19.5" fill="#f6f6f6" stroke="#c4c4c4" stroke-width="1.6"/>
<path d="M15 12.5 l3.5 -2 l4 6 l-2.5 2.5 c1 3 3 5.5 6 7 l2.5 -2.5 l6 4 l-2 3.5 c-1 1.5 -3 1.5 -5 0.5 c-6 -3 -11 -8.5 -13.5 -14 c-1 -2 -0.5 -4 1 -5z" fill="none" stroke="#c4c4c4" stroke-width="1.4" stroke-linejoin="round"/>
</svg>
<svg class="a" style="left:760px;top:456px;" width="28" height="29" viewBox="0 0 28 29"><circle cx="16.2" cy="10.3" r="8" fill="none" stroke="#82b4dc" stroke-width="1.5"/><path d="M10.5 16 L2.8 24.3" stroke="#82b4dc" stroke-width="1.6"/></svg>
<svg class="a" style="left:585px;top:773px;" width="31" height="31" viewBox="0 0 31 31"><path d="M20.81 12.58 L25.13 13.33 L25.13 17.27 L20.81 18.02 L19.51 20.27 L21.02 24.39 L17.61 26.36 L14.80 22.99 L12.20 22.99 L9.39 26.36 L5.98 24.39 L7.49 20.27 L6.19 18.02 L1.87 17.27 L1.87 13.33 L6.19 12.58 L7.49 10.33 L5.98 6.21 L9.39 4.24 L12.20 7.61 L14.80 7.61 L17.61 4.24 L21.02 6.21 L19.51 10.33Z" fill="none" stroke="#c4c8cc" stroke-width="1.3" stroke-linejoin="round"/><circle cx="13.5" cy="15.3" r="4.2" fill="none" stroke="#c4c8cc" stroke-width="1.3"/></svg>
<svg class="a" style="left:1445px;top:739px;" width="44" height="51" viewBox="0 0 44 51"><circle cx="21.2" cy="24.7" r="18.8" fill="#fff" stroke="#90c4ea" stroke-width="1.5"/><path d="M10.5 29.5 L21.2 19 L31.9 29.5" fill="none" stroke="#90c4ea" stroke-width="1.5"/></svg>
<svg class="a" style="left:1445px;top:797px;" width="44" height="52" viewBox="0 0 44 52"><circle cx="21.2" cy="25.5" r="18.8" fill="#fff" stroke="#3d97d8" stroke-width="1.7"/><path d="M10.5 20.5 L21.2 31 L31.9 20.5" fill="none" stroke="#3d97d8" stroke-width="1.7"/></svg>
<svg class="a" style="left:1437px;top:1047px;" width="29" height="29" viewBox="0 0 29 29"><circle cx="17" cy="12.5" r="8" fill="none" stroke="#5b9bd5" stroke-width="1.7"/><path d="M11.4 18.3 L3.2 26.5" stroke="#5b9bd5" stroke-width="1.8"/></svg>
<div class="a circ" style="left:0.8000000000000007px;top:103.80000000000001px;width:59px;height:59px;"><span style="position:absolute;left:0;right:0;top:25.0px;line-height:16px;font-size:23px;">1</span></div>
<div class="a" style="left:100px;top:480px;width:60px;height:70px;overflow:hidden;"><div class="a circ" style="left:3px;top:5.5px;width:58px;height:59px;"><span style="position:absolute;left:0;right:0;top:25.0px;line-height:16px;font-size:23px;">2</span></div></div>
<div class="a circ" style="left:447.65px;top:847.65px;width:58.7px;height:58.7px;"><span style="position:absolute;left:0;right:0;top:24.85px;line-height:16px;font-size:23px;">3</span></div>
<div class="a circ" style="left:1123.3500000000001px;top:840.75px;width:58.7px;height:58.7px;"><span style="position:absolute;left:0;right:0;top:24.85px;line-height:16px;font-size:23px;">4</span></div>
<div class="a circ" style="left:1123.3500000000001px;top:1043.15px;width:58.7px;height:58.7px;"><span style="position:absolute;left:0;right:0;top:24.85px;line-height:16px;font-size:23px;">5</span></div>
</body></html>
